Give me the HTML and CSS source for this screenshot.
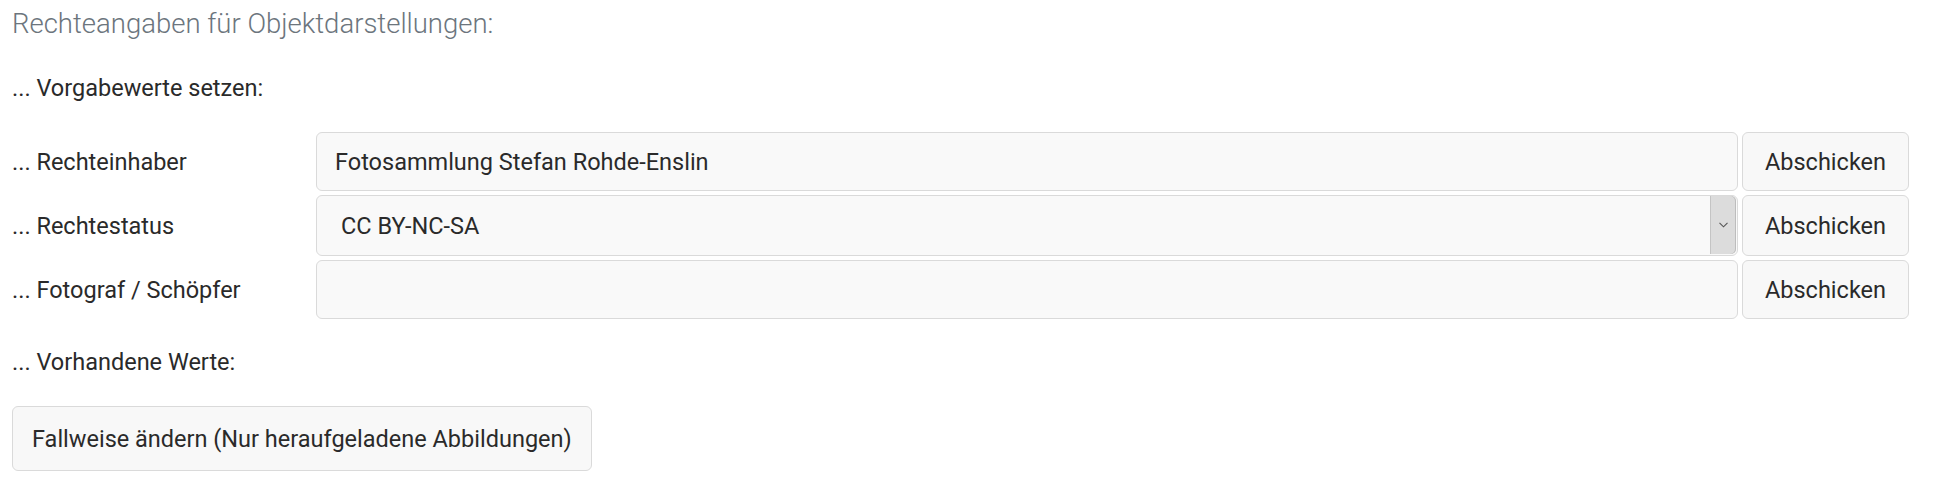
FILE: index.html
```html
<!DOCTYPE html>
<html lang="de">
<head>
<meta charset="utf-8">
<title>Rechteangaben</title>
<link rel="stylesheet" href="styles.css">
</head>
<body>
<div class="page">
  <h2 class="title">Rechteangaben für Objektdarstellungen:</h2>
  <p class="section">... Vorgabewerte setzen:</p>
  <form class="rows">
    <div class="row row-a">
      <label class="label">... Rechteinhaber</label>
      <input class="field" type="text" value="Fotosammlung Stefan Rohde-Enslin">
      <button class="btn" type="button">Abschicken</button>
    </div>
    <div class="row row-b">
      <label class="label">... Rechtestatus</label>
      <div class="selectbox">
        <select class="select">
          <option>CC BY-NC-SA</option>
        </select>
        <span class="arrow"><svg width="9" height="6" viewBox="0 0 9 6"><path d="M0.5 0.8 L4.5 4.8 L8.5 0.8" fill="none" stroke="#555" stroke-width="1.1"/></svg></span>
      </div>
      <button class="btn" type="button">Abschicken</button>
    </div>
    <div class="row row-a">
      <label class="label">... Fotograf / Schöpfer</label>
      <input class="field" type="text" value="">
      <button class="btn" type="button">Abschicken</button>
    </div>
  </form>
  <p class="section section-b">... Vorhandene Werte:</p>
  <button class="btn btn-wide" type="button">Fallweise ändern (Nur heraufgeladene Abbildungen)</button>
</div>
</body>
</html>
```

FILE: styles.css
```css
html, body {
  margin: 0;
  padding: 0;
  background: #ffffff;
}

body {
  font-family: Roboto, "Liberation Sans", sans-serif;
  color: #2a2a2a;
  font-size: 23.5px;
  line-height: 30px;
}

.page {
  padding: 7px 27px 0 12px;
}

.title {
  margin: 0;
  font-size: 27.5px;
  font-weight: 300;
  line-height: 34px;
  color: #6c757d;
}

.section {
  margin: 32px 0 0 0;
  font-size: 23.5px;
  line-height: 30px;
}

.section-b {
  margin-top: 28px;
}

.rows {
  margin: 29px 0 0 0;
  display: flex;
  flex-direction: column;
  gap: 4px;
}

.row {
  display: grid;
  grid-template-columns: 300px 1fr 167px;
  column-gap: 4px;
  align-items: stretch;
}

.row-a {
  height: 59px;
}

.row-b {
  height: 61px;
}

.label {
  align-self: center;
  font-size: 23.5px;
  line-height: 30px;
}

.field {
  box-sizing: border-box;
  height: 100%;
  width: 100%;
  margin: 0;
  border: 1px solid #dadada;
  border-radius: 6px;
  background: #f9f9f9;
  padding: 0 18px;
  font: inherit;
  color: #2a2a2a;
  outline: none;
}

.selectbox {
  box-sizing: border-box;
  display: flex;
  height: 100%;
  border: 1px solid #dadada;
  border-radius: 6px;
  background: #f9f9f9;
  overflow: hidden;
}

.select {
  flex: 1;
  appearance: none;
  -webkit-appearance: none;
  border: 0;
  background: transparent;
  margin: 0;
  padding: 0 24px;
  font: inherit;
  color: #2a2a2a;
  outline: none;
}

.arrow {
  width: 25px;
  margin: 0 1px 1px 0;
  display: flex;
  align-items: center;
  justify-content: center;
  background: #dcdcdc;
  border-left: 1px solid #c4c4c4;
  border-radius: 0 5px 5px 0;
  box-shadow: inset -1px 0 0 #bdbdbd;
}

.btn {
  box-sizing: border-box;
  margin: 0;
  height: 100%;
  border: 1px solid #dadada;
  border-radius: 6px;
  background: #f8f8f8;
  font: inherit;
  color: #2a2a2a;
  padding: 0;
  cursor: pointer;
}

.btn-wide {
  display: block;
  height: 65px;
  margin-top: 29px;
  padding: 0 19px 0 19px;
}
```
